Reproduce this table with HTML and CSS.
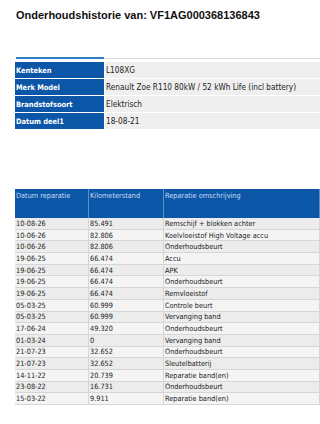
FILE: index.html
```html
<!DOCTYPE html>
<html lang="nl">
<head>
<meta charset="utf-8">
<title>Onderhoudshistorie</title>
<link rel="stylesheet" href="styles.css">
</head>
<body>
<h1 class="title">Onderhoudshistorie van: VF1AG000368136843</h1>
<div class="tabs"><span class="tab-active"></span><span class="tab-rest"></span></div>
<table class="info">
  <tr><th>Kenteken</th><td>L108XG</td></tr>
  <tr><th>Merk Model</th><td>Renault Zoe R110 80kW / 52 kWh Life (incl battery)</td></tr>
  <tr><th>Brandstofsoort</th><td>Elektrisch</td></tr>
  <tr><th>Datum deel1</th><td>18-08-21</td></tr>
</table>
<table class="history">
  <thead>
    <tr><th class="c1">Datum reparatie</th><th class="c2">Kilometerstand</th><th>Reparatie omschrijving</th></tr>
  </thead>
  <tbody>
    <tr><td>10-08-26</td><td>85.491</td><td>Remschijf + blokken achter</td></tr>
    <tr><td>10-06-26</td><td>82.806</td><td>Koelvloeistof High Voltage accu</td></tr>
    <tr><td>10-06-26</td><td>82.806</td><td>Onderhoudsbeurt</td></tr>
    <tr><td>19-06-25</td><td>66.474</td><td>Accu</td></tr>
    <tr><td>19-06-25</td><td>66.474</td><td>APK</td></tr>
    <tr><td>19-06-25</td><td>66.474</td><td>Onderhoudsbeurt</td></tr>
    <tr><td>19-06-25</td><td>66.474</td><td>Remvloeistof</td></tr>
    <tr><td>05-03-25</td><td>60.999</td><td>Controle beurt</td></tr>
    <tr><td>05-03-25</td><td>60.999</td><td>Vervanging band</td></tr>
    <tr><td>17-06-24</td><td>49.320</td><td>Onderhoudsbeurt</td></tr>
    <tr><td>01-03-24</td><td>0</td><td>Vervanging band</td></tr>
    <tr><td>21-07-23</td><td>32.652</td><td>Onderhoudsbeurt</td></tr>
    <tr><td>21-07-23</td><td>32.652</td><td>Sleutelbatterij</td></tr>
    <tr><td>14-11-22</td><td>20.739</td><td>Reparatie band(en)</td></tr>
    <tr><td>23-08-22</td><td>16.731</td><td>Onderhoudsbeurt</td></tr>
    <tr><td>15-03-22</td><td>9.911</td><td>Reparatie band(en)</td></tr>
  </tbody>
</table>
</body>
</html>
```
FILE: styles.css
```css
html, body {
  margin: 0;
  padding: 0;
  background: #ffffff;
}
body {
  width: 320px;
  overflow: hidden;
  font-family: "DejaVu Sans Condensed", "DejaVu Sans", sans-serif;
  color: #1a1a1a;
}
.title {
  margin: 8px 0 0 16px;
  font-family: "Liberation Sans", Arial, sans-serif;
  font-size: 11px;
  line-height: 14px;
  font-weight: bold;
  color: #111;
}
.tabs {
  display: flex;
  align-items: flex-end;
  margin: 35px 0 0 16px;
  height: 2px;
}
.tab-active {
  width: 88px;
  height: 2px;
  background: #2f7fc8;
}
.tab-rest {
  flex: 1;
  height: 1px;
  background: #dedede;
}
.info {
  margin: 3px 0 0 15px;
  width: 305px;
  border-collapse: collapse;
  font-stretch: condensed;
}
.info th, .info td {
  border-bottom: 1px solid #ffffff;
  height: 16px;
  padding: 0 0 0 1px;
  text-align: left;
  vertical-align: middle;
}
.info th {
  width: 88px;
  background: #0b56a6;
  color: #ffffff;
  font-size: 7.4px;
  font-weight: bold;
  border-right: 1px solid #ffffff;
}
.info td {
  background: #efefef;
  font-size: 8.2px;
  color: #222;
}
.history {
  margin: 59px 0 0 15px;
  width: 305px;
  border-collapse: collapse;
  font-stretch: condensed;
}
.history th {
  height: 27px;
  padding: 2px 0 0 1px;
  background: #0b56a6;
  color: #c8dcf4;
  font-size: 7.3px;
  font-weight: normal;
  text-align: left;
  vertical-align: top;
  border-right: 1px solid #5b8fc8;
}
.history th.c1 { width: 72px; }
.history th.c2 { width: 73px; }
.history td {
  height: 10.7px;
  padding: 0 0 0 1px;
  font-size: 7.3px;
  color: #222;
  border-bottom: 1px solid #d6d6d6;
  border-right: 1px solid #d6d6d6;
  background: #f4f4f4;
  white-space: nowrap;
}
.history tbody tr:nth-child(odd) td {
  background: #ececec;
}
```
